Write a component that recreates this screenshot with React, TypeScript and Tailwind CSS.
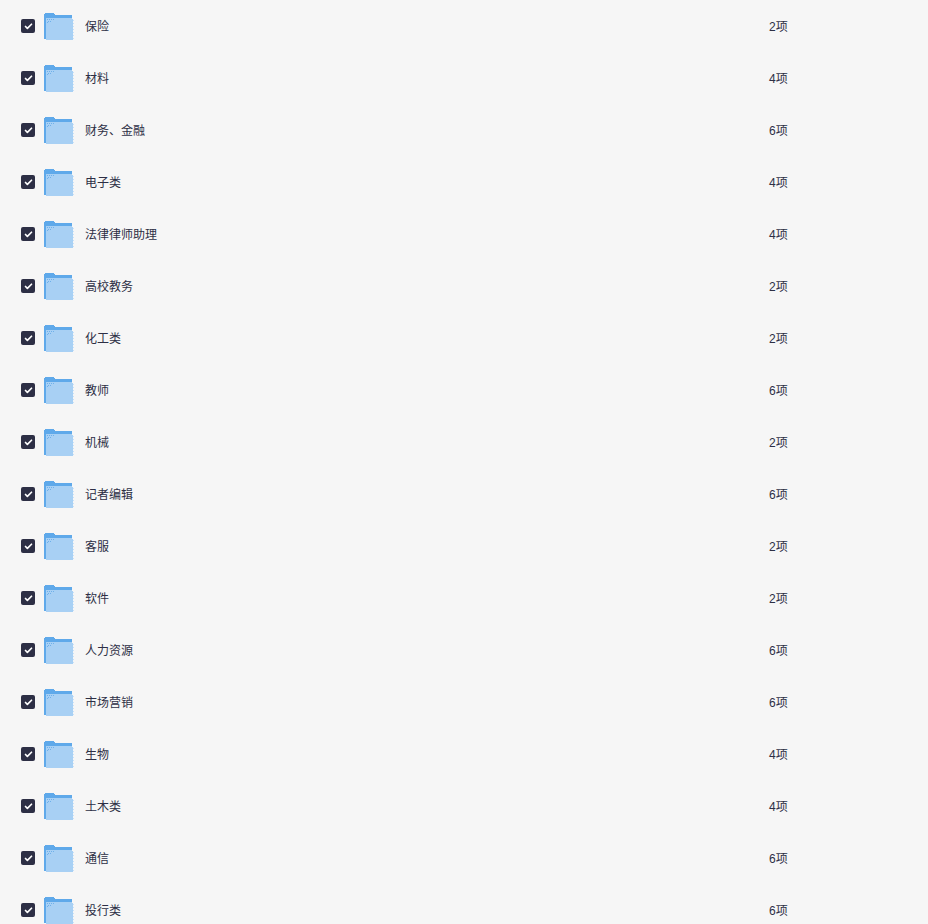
import { Check } from "lucide-react";

const folders = [
  ["保险", "2项"],
  ["材料", "4项"],
  ["财务、金融", "6项"],
  ["电子类", "4项"],
  ["法律律师助理", "4项"],
  ["高校教务", "2项"],
  ["化工类", "2项"],
  ["教师", "6项"],
  ["机械", "2项"],
  ["记者编辑", "6项"],
  ["客服", "2项"],
  ["软件", "2项"],
  ["人力资源", "6项"],
  ["市场营销", "6项"],
  ["生物", "4项"],
  ["土木类", "4项"],
  ["通信", "6项"],
  ["投行类", "6项"],
];

function FolderIcon() {
  return (
    <svg width="30" height="28" viewBox="0 0 30 28" className="block shrink-0" shapeRendering="crispEdges">
      <path d="M1 1h9v1h1v1h17v3H1z" fill="#5fa9ea" />
      <path d="M0 2h2v25H0z" fill="#5fa9ea" />
      <path d="M2 6h26v1h1v21H2z" fill="#a8d0f4" />
      <path d="M29 8h1v1h-1zM29 11h1v1h-1zM29 14h1v1h-1zM29 17h1v1h-1zM29 20h1v1h-1zM29 23h1v1h-1zM29 26h1v1h-1z" fill="#c6e1f9" />
      <path d="M3 7h1v1H3zM5 7h1v1H5zM7 7h1v1H7zM9 7h1v1H9zM4 9h1v1H4zM6 9h1v1H6zM3 10h1v1H3z" fill="#6fb0ea" />
    </svg>
  );
}

export default function App() {
  return (
    <div className="h-[924px] overflow-hidden bg-[#f6f6f6] font-['Liberation_Sans','Noto_Sans_CJK_SC',sans-serif] text-xs text-[#2d2f45]">
      {folders.map(([name, count]) => (
        <div key={name} className="flex h-[52px] items-center pl-[21px]">
          <span className="flex h-[14px] w-[14px] shrink-0 items-center justify-center rounded-[2px] bg-[#2d2f45]">
            <Check size={9} strokeWidth={4.5} className="text-white" />
          </span>
          <span className="ml-[9px]">
            <FolderIcon />
          </span>
          <span className="ml-[11px] w-[684px] shrink-0 pt-[2px]">{name}</span>
          <span className="pt-[2px]">{count}</span>
        </div>
      ))}
    </div>
  );
}
